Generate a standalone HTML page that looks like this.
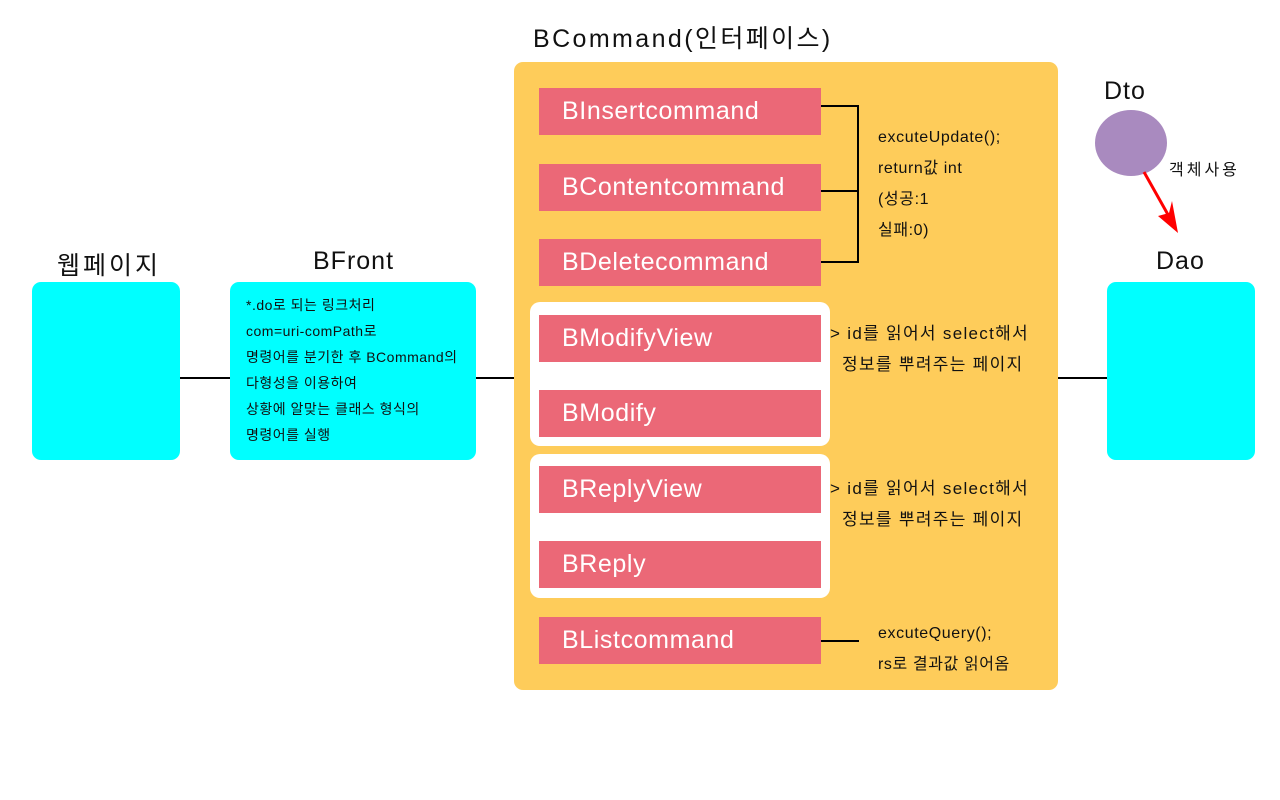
<!DOCTYPE html><html><head><meta charset="utf-8"><style>
body{margin:0;width:1280px;height:800px;background:#fff;position:relative;overflow:hidden;font-family:"Liberation Sans","Noto Sans CJK KR","NanumGothic",sans-serif}
div{position:absolute;box-sizing:border-box;white-space:nowrap}
.r{background:#eb6877;color:#fff;font-size:25px;letter-spacing:0.6px;left:539px;width:282px;height:47px;line-height:47px;padding-left:23px}
.cy{background:#00ffff;border-radius:9px}
.t{font-size:16px;letter-spacing:0.6px;color:#111;line-height:31px}
.h{font-size:25px;color:#111;letter-spacing:1px}
.ln{background:#000}
</style></head><body>
<div class="h" style="left:533px;top:19px;letter-spacing:2.4px">BCommand(인터페이스)</div>
<div style="left:514px;top:62px;width:544px;height:628px;background:#fecc5a;border-radius:9px"></div>
<div style="left:530px;top:302px;width:300px;height:144px;background:#fff;border-radius:10px"></div>
<div style="left:530px;top:454px;width:300px;height:144px;background:#fff;border-radius:10px"></div>
<div class="r" style="top:88px">BInsertcommand</div>
<div class="r" style="top:164px">BContentcommand</div>
<div class="r" style="top:239px">BDeletecommand</div>
<div class="r" style="top:315px">BModifyView</div>
<div class="r" style="top:390px">BModify</div>
<div class="r" style="top:466px">BReplyView</div>
<div class="r" style="top:541px">BReply</div>
<div class="r" style="top:617px">BListcommand</div>
<div class="ln" style="left:821px;top:105px;width:38px;height:2px"></div>
<div class="ln" style="left:821px;top:190px;width:38px;height:2px"></div>
<div class="ln" style="left:821px;top:261px;width:38px;height:2px"></div>
<div class="ln" style="left:857px;top:105px;width:2px;height:158px"></div>
<div class="ln" style="left:821px;top:640px;width:38px;height:2px"></div>
<div class="t" style="left:878px;top:122px">excuteUpdate();<br>return값 int<br>(성공:1<br>실패:0)</div>
<div class="t" style="left:830px;top:318px;font-size:17px;letter-spacing:1.3px">&gt; id를 읽어서 select해서<br>&nbsp;&nbsp;정보를 뿌려주는 페이지</div>
<div class="t" style="left:830px;top:473px;font-size:17px;letter-spacing:1.3px">&gt; id를 읽어서 select해서<br>&nbsp;&nbsp;정보를 뿌려주는 페이지</div>
<div class="t" style="left:878px;top:618px">excuteQuery();<br>rs로 결과값 읽어옴</div>
<div class="h" style="left:57px;top:246px;letter-spacing:3px">웹페이지</div>
<div class="h" style="left:313px;top:247px">BFront</div>
<div class="h" style="left:1156px;top:247px">Dao</div>
<div class="h" style="left:1104px;top:77px">Dto</div>
<div class="cy" style="left:32px;top:282px;width:148px;height:178px"></div>
<div class="cy" style="left:230px;top:282px;width:246px;height:178px"></div>
<div class="cy" style="left:1107px;top:282px;width:148px;height:178px"></div>
<div style="left:246px;top:292px;font-size:14px;letter-spacing:0.5px;line-height:26px;color:#111">*.do로 되는 링크처리<br>com=uri-comPath로<br>명령어를 분기한 후 BCommand의<br>다형성을 이용하여<br>상황에 알맞는 클래스 형식의<br>명령어를 실행</div>
<div class="ln" style="left:180px;top:377px;width:50px;height:2px"></div>
<div class="ln" style="left:476px;top:377px;width:38px;height:2px"></div>
<div class="ln" style="left:1058px;top:377px;width:49px;height:2px"></div>
<div style="left:1095px;top:110px;width:72px;height:66px;border-radius:50%;background:#a98abf"></div>
<div class="t" style="left:1169px;top:155px;letter-spacing:3px">객체사용</div>
<svg style="position:absolute;left:0;top:0" width="1280" height="800"><line x1="1144" y1="172" x2="1171" y2="220" stroke="#f00" stroke-width="3"/><polygon points="1178,233 1158,216 1169,213 1172,201" fill="#f00"/></svg>
</body></html>
